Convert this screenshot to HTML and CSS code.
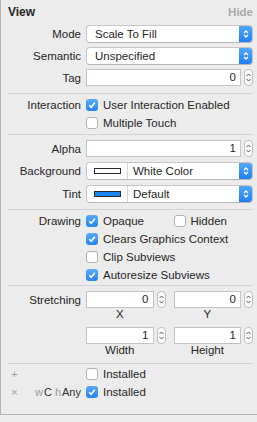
FILE: index.html
```html
<!DOCTYPE html>
<html lang="en">
<head>
    <meta charset="UTF-8">
    <title>View Inspector</title>
    <link rel="stylesheet" href="styles.css">
</head>
<body>
<div class="inspector">
    <div class="head">
        <span class="title">View</span>
        <span class="hide">Hide</span>
    </div>

    <div class="group g1">
        <div class="row">
            <span class="lbl">Mode</span>
            <div class="popup">
                <span class="val">Scale To Fill</span>
                <span class="arrows"><svg width="8" height="12" viewBox="0 0 8 12"><path d="M2 5 L4 3 L6 5 M2 7 L4 9 L6 7" fill="none" stroke="#fff" stroke-width="1.3"/></svg></span>
            </div>
        </div>
        <div class="row">
            <span class="lbl">Semantic</span>
            <div class="popup">
                <span class="val">Unspecified</span>
                <span class="arrows"><svg width="8" height="12" viewBox="0 0 8 12"><path d="M2 5 L4 3 L6 5 M2 7 L4 9 L6 7" fill="none" stroke="#fff" stroke-width="1.3"/></svg></span>
            </div>
        </div>
        <div class="row">
            <span class="lbl">Tag</span>
            <div class="numfield">
                <span class="num">0</span>
                <span class="stepper"><svg width="7" height="15" viewBox="0 0 7 15"><path d="M1.5 6 L3.5 4 L5.5 6 M1.5 9 L3.5 11 L5.5 9" fill="none" stroke="#555" stroke-width="1"/></svg></span>
            </div>
        </div>
    </div>

    <div class="group g2">
        <div class="row">
            <span class="lbl">Interaction</span>
            <div class="check on"><span class="box"><svg width="12" height="12" viewBox="0 0 12 12"><path d="M3.2 6.3 L5.1 8.2 L8.8 3.8" fill="none" stroke="#fff" stroke-width="1.6"/></svg></span>User Interaction Enabled</div>
        </div>
        <div class="row">
            <span class="lbl"></span>
            <div class="check"><span class="box"></span>Multiple Touch</div>
        </div>
    </div>

    <div class="group g3">
        <div class="row">
            <span class="lbl">Alpha</span>
            <div class="numfield">
                <span class="num">1</span>
                <span class="stepper"><svg width="7" height="15" viewBox="0 0 7 15"><path d="M1.5 6 L3.5 4 L5.5 6 M1.5 9 L3.5 11 L5.5 9" fill="none" stroke="#555" stroke-width="1"/></svg></span>
            </div>
        </div>
        <div class="row">
            <span class="lbl">Background</span>
            <div class="popup">
                <span class="well"><span class="swatch white"></span></span>
                <span class="val">White Color</span>
                <span class="arrows"><svg width="8" height="12" viewBox="0 0 8 12"><path d="M2 5 L4 3 L6 5 M2 7 L4 9 L6 7" fill="none" stroke="#fff" stroke-width="1.3"/></svg></span>
            </div>
        </div>
        <div class="row">
            <span class="lbl">Tint</span>
            <div class="popup">
                <span class="well"><span class="swatch blue"></span></span>
                <span class="val">Default</span>
                <span class="arrows"><svg width="8" height="12" viewBox="0 0 8 12"><path d="M2 5 L4 3 L6 5 M2 7 L4 9 L6 7" fill="none" stroke="#fff" stroke-width="1.3"/></svg></span>
            </div>
        </div>
    </div>

    <div class="group g4">
        <div class="row">
            <span class="lbl">Drawing</span>
            <div class="pair">
                <div class="check on"><span class="box"><svg width="12" height="12" viewBox="0 0 12 12"><path d="M3.2 6.3 L5.1 8.2 L8.8 3.8" fill="none" stroke="#fff" stroke-width="1.6"/></svg></span>Opaque</div>
                <div class="check"><span class="box"></span>Hidden</div>
            </div>
        </div>
        <div class="row">
            <span class="lbl"></span>
            <div class="check on"><span class="box"><svg width="12" height="12" viewBox="0 0 12 12"><path d="M3.2 6.3 L5.1 8.2 L8.8 3.8" fill="none" stroke="#fff" stroke-width="1.6"/></svg></span>Clears Graphics Context</div>
        </div>
        <div class="row">
            <span class="lbl"></span>
            <div class="check"><span class="box"></span>Clip Subviews</div>
        </div>
        <div class="row">
            <span class="lbl"></span>
            <div class="check on"><span class="box"><svg width="12" height="12" viewBox="0 0 12 12"><path d="M3.2 6.3 L5.1 8.2 L8.8 3.8" fill="none" stroke="#fff" stroke-width="1.6"/></svg></span>Autoresize Subviews</div>
        </div>
    </div>

    <div class="group g5">
        <div class="row">
            <span class="lbl">Stretching</span>
            <div class="pair">
                <div class="numfield"><span class="num">0</span><span class="stepper"><svg width="7" height="15" viewBox="0 0 7 15"><path d="M1.5 6 L3.5 4 L5.5 6 M1.5 9 L3.5 11 L5.5 9" fill="none" stroke="#555" stroke-width="1"/></svg></span></div>
                <div class="numfield"><span class="num">0</span><span class="stepper"><svg width="7" height="15" viewBox="0 0 7 15"><path d="M1.5 6 L3.5 4 L5.5 6 M1.5 9 L3.5 11 L5.5 9" fill="none" stroke="#555" stroke-width="1"/></svg></span></div>
            </div>
        </div>
        <div class="row sub">
            <span class="lbl"></span>
            <div class="pair">
                <span class="cap">X</span>
                <span class="cap">Y</span>
            </div>
        </div>
        <div class="row gap">
            <span class="lbl"></span>
            <div class="pair">
                <div class="numfield"><span class="num">1</span><span class="stepper"><svg width="7" height="15" viewBox="0 0 7 15"><path d="M1.5 6 L3.5 4 L5.5 6 M1.5 9 L3.5 11 L5.5 9" fill="none" stroke="#555" stroke-width="1"/></svg></span></div>
                <div class="numfield"><span class="num">1</span><span class="stepper"><svg width="7" height="15" viewBox="0 0 7 15"><path d="M1.5 6 L3.5 4 L5.5 6 M1.5 9 L3.5 11 L5.5 9" fill="none" stroke="#555" stroke-width="1"/></svg></span></div>
            </div>
        </div>
        <div class="row sub">
            <span class="lbl"></span>
            <div class="pair">
                <span class="cap">Width</span>
                <span class="cap">Height</span>
            </div>
        </div>
    </div>

    <div class="group g6">
        <div class="row">
            <span class="lbl trait"><span class="sign">+</span></span>
            <div class="check"><span class="box"></span>Installed</div>
        </div>
        <div class="row">
            <span class="lbl trait"><span class="sign">&times;</span><span class="size"><i>w</i>C <i>h</i>Any</span></span>
            <div class="check on"><span class="box"><svg width="12" height="12" viewBox="0 0 12 12"><path d="M3.2 6.3 L5.1 8.2 L8.8 3.8" fill="none" stroke="#fff" stroke-width="1.6"/></svg></span>Installed</div>
        </div>
    </div>
</div>
</body>
</html>
```

FILE: styles.css
```css
body{
    margin: 0;
    background-color: #ececec;
    font-family: "Liberation Sans", Arial, sans-serif;
    font-size: 11.5px;
    color: #262626;
}

.inspector{
    height: 414px;
    border-left: 1px solid #b4b4b4;
    border-bottom: 1px solid #b4b4b4;
    padding: 0 4px 0 7px;
}

.head{
    height: 22px;
    display: flex;
    justify-content: space-between;
    align-items: center;
    padding-top: 2px;
    box-sizing: border-box;
    font-weight: bold;
    font-size: 12px;
}
.head .hide{
    color: #a9a9a9;
    font-size: 11.5px;
}

.group{
    border-top: 1px solid #d3d3d3;
    display: flex;
    flex-direction: column;
}
.head + .group{
    border-top: none;
}
.g1{ padding: 3px 0 7px; gap: 4px; }
.g2{ padding: 3px 0 3px; gap: 2px; }
.g3{ padding: 5px 0 6px; gap: 5px; }
.g4{ padding: 2px 0 1px; }
.g5{ padding: 5px 0 7px; }
.g6{ padding: 1px 0 0; }

.row{
    display: grid;
    grid-template-columns: 73px 1fr;
    column-gap: 5px;
    align-items: center;
    min-height: 16px;
}
.g4 .row, .g6 .row{
    height: 18px;
}
.lbl{
    text-align: right;
    white-space: nowrap;
}

/* popup button */
.popup{
    height: 18px;
    box-sizing: border-box;
    display: flex;
    align-items: center;
    background-color: #fff;
    border: 1px solid #c6c6c6;
    border-bottom-color: #b5b5b5;
    border-radius: 4px;
    overflow: hidden;
}
.popup .val{
    flex: 1;
    padding-left: 8px;
}
.popup .arrows{
    width: 13px;
    align-self: stretch;
    display: flex;
    align-items: center;
    justify-content: center;
    background: linear-gradient(#52a7fa, #1f80f4);
}
.well{
    width: 40px;
    align-self: stretch;
    display: flex;
    align-items: center;
    justify-content: center;
    border-right: 1px solid #d6d6d6;
    box-sizing: border-box;
    margin-left: 1px;
}
.well + .val{
    padding-left: 5px;
}
.swatch{
    width: 25px;
    height: 4px;
    border: 1px solid #2b2b2b;
}
.swatch.white{ background-color: #fff; }
.swatch.blue{ background-color: #1a84f2; }

/* number field with stepper */
.numfield{
    display: flex;
    align-items: center;
    gap: 3px;
}
.num{
    flex: 1;
    height: 17px;
    box-sizing: border-box;
    background-color: #fff;
    border: 1px solid #c4c4c4;
    text-align: right;
    padding-right: 4px;
    line-height: 15px;
}
.stepper{
    width: 9px;
    height: 17px;
    box-sizing: border-box;
    border: 1px solid #c0c0c0;
    border-radius: 4px;
    background-color: #fbfbfb;
    display: flex;
    align-items: center;
    justify-content: center;
}

/* checkbox */
.check{
    display: flex;
    align-items: center;
    gap: 5px;
    white-space: nowrap;
}
.box{
    width: 12px;
    height: 12px;
    box-sizing: border-box;
    border: 1px solid #b3b3b3;
    border-radius: 3px;
    background-color: #fff;
    display: flex;
}
.check.on .box{
    border: none;
    background: linear-gradient(#5aabf9, #2583f4);
}

.pair{
    display: grid;
    grid-template-columns: 1fr 1fr;
    column-gap: 8px;
}
.row.sub{
    min-height: 0;
}
.cap{
    text-align: center;
    padding-right: 12px;
    height: 12px;
    line-height: 12px;
}
.row.gap{
    margin-top: 7px;
}

.trait{
    display: flex;
    justify-content: space-between;
    color: #8a8a8a;
}
.sign{
    padding-left: 3px;
    color: #a0a0a0;
}
.size{
    color: #333;
    font-size: 11px;
}
.size i{
    font-style: normal;
    color: #9a9a9a;
    margin-right: 1px;
}
```
